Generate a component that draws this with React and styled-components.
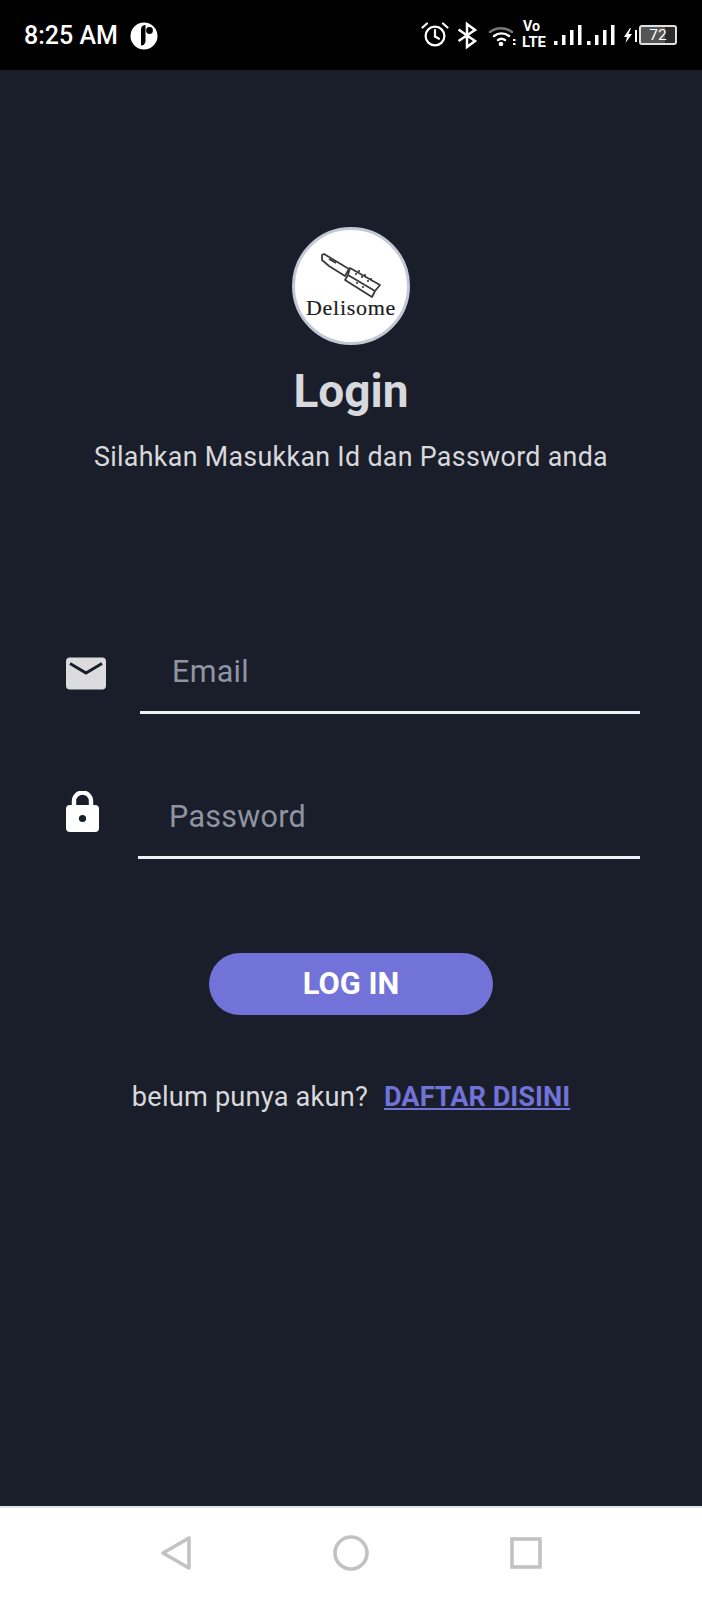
import React from "react";
import styled, { createGlobalStyle } from "styled-components";

const Global = createGlobalStyle`
  html, body { margin: 0; padding: 0; background: #1a1e2a; }
  body { font-family: Roboto, "Liberation Sans", sans-serif; }
  * { box-sizing: border-box; }
`;

const Page = styled.div`
  width: 702px; height: 1600px; display: flex; flex-direction: column; overflow: hidden;
  background: #1a1e2a;
`;
const StatusBar = styled.div`
  height: 70px; background: #000; color: #fff; display: flex; align-items: center;
  justify-content: space-between; padding: 0 25px 0 24px; flex: none;
`;
const StatusLeft = styled.div`
  display: flex; align-items: center; gap: 12px; margin-top: 1px;
`;
const Clock = styled.span`
  font-size: 25px; font-weight: 500; line-height: 28px;
`;
const StatusRight = styled.div`
  display: flex; align-items: center; gap: 0;
`;
const Main = styled.main`
  flex: 1; display: flex; flex-direction: column; align-items: center; padding-top: 157px;
`;
const Logo = styled.div`
  width: 118px; height: 118px; border-radius: 50%; background: #fff; border: 3px solid #c3c9d4;
  display: flex; flex-direction: column; align-items: center; padding-top: 23px; flex: none;
`;
const LogoText = styled.span`
  font-family: "Liberation Serif", serif; font-size: 22px; letter-spacing: 0.7px; color: #1d1d1d;
  line-height: 24px; margin-top: -2px; white-space: nowrap; -webkit-text-stroke: 0.2px #1d1d1d;
`;
const Title = styled.h1`
  margin: 16px 0 0; font-size: 46px; line-height: 60px; font-weight: 700; color: #d8d9dc;
`;
const Subtitle = styled.p`
  margin: 18px 0 0; font-size: 26.8px; line-height: 36px; color: #d8d9dc; letter-spacing: 0.32px;
`;
const Form = styled.div`
  width: 100%; margin-top: 162px; display: flex; flex-direction: column; gap: 68px;
  padding: 0 62px 0 66px;
`;
const Field = styled.div`
  display: flex; align-items: flex-start;
`;
const IconSlot = styled.div`
  width: ${p => p.$w}px; flex: none; padding-top: ${p => p.$top}px;
`;
const InputBox = styled.div`
  flex: 1; height: 77px; border-bottom: 3px solid #eef0f6; padding: 17px 0 0 ${p => p.$pad}px;
  font-size: 30.5px; line-height: 36px; color: #8f94a2; letter-spacing: 0.3px;
`;
const LoginButton = styled.button`
  width: 284px; height: 62px; border: 0; border-radius: 31px; background: #7173d8; color: #fff;
  font: 700 30.8px/34px Roboto, sans-serif; margin-top: 94px; padding: 0;
`;
const Footer = styled.div`
  margin-top: 64px; display: flex; align-items: center; gap: 16px; font-size: 27.2px; line-height: 36px;
  color: #d8d9dc; letter-spacing: 0.2px;
`;
const SignupLink = styled.a`
  color: #7173d8; font-weight: 700; text-decoration: underline; font-size: 27.2px; letter-spacing: 0;
`;
const NavBar = styled.nav`
  height: 94px; flex: none; background: #fff; border-top: 2px solid #e4e6e6; display: flex;
  align-items: center; padding: 0 0 2px 160px; gap: 141px;
`;
const Battery = styled.div`
  width: 38px; height: 20px; border: 2px solid #e0e0e0; border-radius: 3px; margin-left: -1px;
  font-size: 15.5px; line-height: 16px; color: #fff; text-align: center;
  background: linear-gradient(90deg, #555 0 72%, #2b2b2b 72%); flex: none;
`;

const AppBadge = () => (
  <svg width="28" height="28" viewBox="0 0 28 28">
    <circle cx="14" cy="14" r="13.5" fill="#fff" />
    <path d="M12.5 1v16a4.5 4.5 0 0 1-4.5 4.5V5.5A4.5 4.5 0 0 1 12.5 1z" fill="#000" transform="translate(3 2)" />
    <circle cx="19.5" cy="8.5" r="3.4" fill="#000" />
  </svg>
);

const StatusIcons = () => (
  <svg width="220" height="36" viewBox="0 0 220 36" fill="none" stroke="#fff">
    <g strokeWidth="2.2" strokeLinecap="round">
      <circle cx="15" cy="19" r="9.4" />
      <path d="M15 13v6.5l4 2.2M2.5 10.5 7 6.5M27.5 10.5 23 6.5" />
    </g>
    <path d="M38.5 12.5 55 24l-8 6V7l8 6L38.5 24" strokeWidth="2.5" />
    <g strokeLinecap="round" strokeWidth="2.4">
      <path d="M70 15a18 18 0 0 1 22 0" stroke="#777" />
      <path d="M74 19a12 12 0 0 1 15 0M78 23a6 6 0 0 1 7 0" />
    </g>
    <circle cx="81" cy="27" r="2.3" fill="#fff" stroke="none" />
    <path d="M93 23h2.5M93 27h2.5" strokeWidth="1.8" />
    <text x="103" y="14" fill="#fff" stroke="none" fontFamily="Roboto, sans-serif" fontWeight="700" fontSize="15" textLength="17" lengthAdjust="spacingAndGlyphs">Vo</text>
    <text x="102" y="30" fill="#fff" stroke="none" fontFamily="Roboto, sans-serif" fontWeight="700" fontSize="15" textLength="24" lengthAdjust="spacingAndGlyphs">LTE</text>
    <g fill="#fff" stroke="none">
      <rect x="134" y="24" width="3.5" height="4" /><rect x="142" y="18" width="3.5" height="10" />
      <rect x="150" y="13" width="3.5" height="15" /><rect x="158" y="8" width="3.5" height="20" />
      <rect x="167" y="24" width="3.5" height="4" /><rect x="175" y="18" width="3.5" height="10" />
      <rect x="183" y="13" width="3.5" height="15" /><rect x="191" y="8" width="3.5" height="20" />
      <path d="M210 11 204 20h3l-1.500 6 6.500-9h-3.500l2.500-6z" />
      <rect x="215" y="13" width="2" height="12" />
    </g>
  </svg>
);

const MailIcon = () => (
  <svg width="40" height="33" viewBox="0 0 40 33">
    <rect width="40" height="32" y="0.5" rx="4" fill="#dcdcde" />
    <path d="M4 6.500 20 16 36 6.500" fill="none" stroke="#1a1e2a" strokeWidth="3" />
  </svg>
);
const LockIcon = () => (
  <svg width="33" height="41" viewBox="0 0 33 41">
    <path d="M8 17V10a8.500 8.500 0 0 1 17 0v7" fill="none" stroke="#fff" strokeWidth="4.4" />
    <rect y="14" width="33" height="27" rx="4" fill="#fff" />
    <circle cx="16.500" cy="27.500" r="3.600" fill="#1a1e2a" />
  </svg>
);
const KnifeLogo = () => (
  <svg width="60" height="45" viewBox="0 0 60 45" fill="none" stroke="#3a3a3a" strokeWidth="1.8" strokeLinejoin="round">
    <path d="M1 2 3 1 28 16l-4 7L8 13 1 7z" />
    <path d="M8 6l7 4" />
    <path d="M29 15 59 32l-5 6-27-16zM27 22l-3 5 27 17 3-6" />
    <g fill="#3a3a3a" stroke="none">
      <circle cx="35" cy="21" r="1.100" /><circle cx="41" cy="24" r="1.100" /><circle cx="47" cy="28" r="1.100" />
      <circle cx="38" cy="18" r="1.100" /><circle cx="44" cy="22" r="1.100" /><circle cx="50" cy="26" r="1.100" />
      <circle cx="36" cy="30" r="1.100" /><circle cx="42" cy="34" r="1.100" />
    </g>
  </svg>
);
const BackIcon = () => (
  <svg width="32" height="36" viewBox="0 0 32 36">
    <path d="M29 3v30L3 18z" fill="none" stroke="#c2c2c2" strokeWidth="3.6" strokeLinejoin="round" />
  </svg>
);
const HomeIcon = () => (
  <svg width="36" height="36" viewBox="0 0 36 36">
    <circle cx="18" cy="18" r="16" fill="none" stroke="#c2c2c2" strokeWidth="3.6" />
  </svg>
);
const RecentIcon = () => (
  <svg width="32" height="32" viewBox="0 0 32 32">
    <rect x="2" y="2" width="28" height="28" fill="none" stroke="#c2c2c2" strokeWidth="3.6" />
  </svg>
);

export default function App() {
  return (
    <Page>
      <Global />
      <StatusBar>
        <StatusLeft>
          <Clock>8:25 AM</Clock>
          <AppBadge />
        </StatusLeft>
        <StatusRight>
          <StatusIcons />
          <Battery>72</Battery>
        </StatusRight>
      </StatusBar>
      <Main>
        <Logo>
          <KnifeLogo />
          <LogoText>Delisome</LogoText>
        </Logo>
        <Title>Login</Title>
        <Subtitle>Silahkan Masukkan Id dan Password anda</Subtitle>
        <Form>
          <Field>
            <IconSlot $w={74} $top={20}><MailIcon /></IconSlot>
            <InputBox $pad={32}>Email</InputBox>
          </Field>
          <Field>
            <IconSlot $w={72} $top={9}><LockIcon /></IconSlot>
            <InputBox $pad={31}>Password</InputBox>
          </Field>
        </Form>
        <LoginButton>LOG IN</LoginButton>
        <Footer>
          <span>belum punya akun?</span>
          <SignupLink>DAFTAR DISINI</SignupLink>
        </Footer>
      </Main>
      <NavBar>
        <BackIcon />
        <HomeIcon />
        <RecentIcon />
      </NavBar>
    </Page>
  );
}
